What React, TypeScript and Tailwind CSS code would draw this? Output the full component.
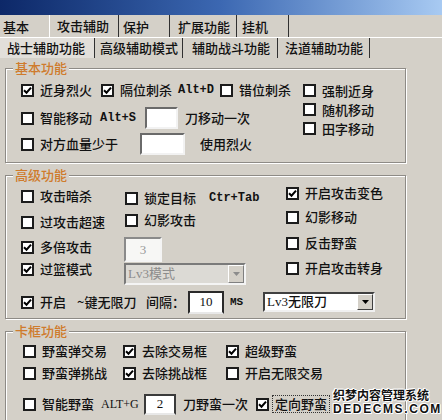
import React from 'react';

type CheckProps = {on?: boolean; label: string; className?: string};

const Box = ({on}: {on?: boolean}) => (
    <span className="flex h-[13px] w-[13px] shrink-0 items-center justify-center border-2 border-[#1c1c1c] bg-white">
        {on && (
            <svg width="9" height="9" viewBox="0 0 9 9">
                <path d="M1 4.2 L3.5 6.7 L8 1.6" stroke="#000" strokeWidth="2" fill="none"/>
            </svg>
        )}
    </span>
);

const Check = ({on, label, className = ''}: CheckProps) => (
    <div className={`flex items-center ${className}`}>
        <Box on={on}/>
        <span className="ml-[6px] whitespace-nowrap">{label}</span>
    </div>
);

const Arrow = ({color}: {color: string}) => (
    <svg width="7" height="4" viewBox="0 0 7 4">
        <path d="M0 0 H7 L3.5 4 Z" fill={color}/>
    </svg>
);

const App: React.FunctionComponent = () => {
    return (
        <div className="relative h-[420px] w-[442px] overflow-hidden bg-[#d4d0c8] text-[13px] font-medium leading-[16px] text-[#111] font-['Noto_Sans_CJK_SC',sans-serif]">
            {/* window caption */}
            <div className="h-[15px] bg-linear-to-r from-[#0d2868] via-[#3c68b2] to-[#a8caf2]"/>

            {/* main tabs */}
            <div className="flex h-[23px] border-b border-white">
                <div className="flex w-[49px] items-center pl-[3px] pt-[2px]">基本</div>
                <div className="flex w-[70px] items-center border-l border-r border-l-white border-r-[#303030] pl-[7px]">攻击辅助</div>
                <div className="flex w-[51px] items-center border-r border-[#303030] pl-[4px] pt-[2px]">保护</div>
                <div className="flex w-[67px] items-center border-r border-[#303030] pl-[8px] pt-[2px]">扩展功能</div>
                <div className="flex w-[52px] items-center border-r border-[#303030] pl-[5px] pt-[2px]">挂机</div>
            </div>

            {/* sub tabs */}
            <div className="flex h-[20px]">
                <div className="flex w-[95px] items-center border-r border-[#303030] bg-[#e2dfda] pl-[7px]">战士辅助功能</div>
                <div className="flex w-[88px] items-center border-r border-[#303030] pl-[5px]">高级辅助模式</div>
                <div className="flex w-[95px] items-center border-r border-[#303030] pl-[9px]">辅助战斗功能</div>
                <div className="flex w-[92px] items-center border-r border-[#303030] pl-[7px]">法道辅助功能</div>
            </div>

            {/* 基本功能 */}
            <fieldset className="ml-[5px] mt-[3px] w-[401px] border border-[#8e8b86] shadow-[inset_1px_1px_0_#fff,1px_1px_0_#fff]">
                <legend className="ml-[7px] bg-[#d4d0c8] px-[2px] leading-[14px] text-[#cf7b2c]">基本功能</legend>
                <div className="flex pb-[7px] pl-[15px]">
                    <div className="w-[282px]">
                        <div className="mt-[4px] flex h-[22px] items-center">
                            <Check on label="近身烈火" className="w-[80px]"/>
                            <div className="flex w-[119px] items-center">
                                <Box on/>
                                <span className="ml-[6px]">隔位刺杀</span>
                                <span className="ml-[6px] text-[12px] font-bold font-['Liberation_Mono',monospace]">Alt+D</span>
                            </div>
                            <Check label="错位刺杀" className="w-[83px]"/>
                        </div>
                        <div className="mt-[6px] flex h-[22px] items-center">
                            <Check label="智能移动" className="w-[79px]"/>
                            <span className="w-[45px] text-[12px] font-bold font-['Liberation_Mono',monospace]">Alt+S</span>
                            <div className="h-[22px] w-[33px] border-2 border-b-[#f2f2f2] border-l-[#6a6a6a] border-r-[#f2f2f2] border-t-[#6a6a6a] bg-white"/>
                            <span className="ml-[7px]">刀移动一次</span>
                        </div>
                        <div className="mt-[4px] flex h-[22px] items-center">
                            <Check label="对方血量少于" className="w-[119px]"/>
                            <div className="h-[22px] w-[45px] border-2 border-b-[#f2f2f2] border-l-[#6a6a6a] border-r-[#f2f2f2] border-t-[#6a6a6a] bg-white"/>
                            <span className="ml-[15px]">使用烈火</span>
                        </div>
                    </div>
                    <div className="mt-[6px] flex flex-col">
                        <Check label="强制近身" className="h-[19px]"/>
                        <Check label="随机移动" className="h-[19px]"/>
                        <Check label="田字移动" className="h-[19px]"/>
                    </div>
                </div>
            </fieldset>

            {/* 高级功能 */}
            <fieldset className="ml-[5px] mt-[5px] w-[401px] border border-[#8e8b86] shadow-[inset_1px_1px_0_#fff,1px_1px_0_#fff]">
                <legend className="ml-[7px] bg-[#d4d0c8] px-[2px] leading-[14px] text-[#cf7b2c]">高级功能</legend>
                <div className="flex pl-[15px]">
                    <div className="flex w-[104px] flex-col">
                        <Check label="攻击暗杀" className="mt-[1px] h-[26px]"/>
                        <Check label="过攻击超速" className="h-[26px]"/>
                        <Check on label="多倍攻击" className="h-[24px]"/>
                        <Check on label="过篮模式" className="h-[20px]"/>
                    </div>
                    <div className="flex w-[161px] flex-col pt-[5px]">
                        <div className="flex h-[22px] items-center">
                            <Box/>
                            <span className="ml-[6px]">锁定目标</span>
                            <span className="ml-[13px] text-[12px] font-bold font-['Liberation_Mono',monospace]">Ctr+Tab</span>
                        </div>
                        <Check label="幻影攻击" className="h-[22px]"/>
                        <div className="-ml-[1px] mt-[6px] flex h-[25px] w-[38px] items-center justify-center border-2 border-b-[#f4f4f4] border-l-[#8a8a8a] border-r-[#f4f4f4] border-t-[#8a8a8a] bg-[#f7f7f5] font-normal text-[#9a9a9a] font-['Liberation_Serif',serif]">3</div>
                        <div className="-ml-[1px] mt-[1px] flex h-[22px] w-[122px] items-center border-2 border-b-[#f4f4f4] border-l-[#7a7a7a] border-r-[#f4f4f4] border-t-[#7a7a7a] bg-[#dcdad5]">
                            <span className="flex-1 pl-[2px] font-normal text-[#8c8c8c] font-['Liberation_Serif','Noto_Sans_CJK_SC',serif]">Lv3模式</span>
                            <span className="flex h-full w-[16px] items-center justify-center border border-b-[#808080] border-l-white border-r-[#808080] border-t-white bg-[#d4d0c8]">
                                <Arrow color="#8c8c8c"/>
                            </span>
                        </div>
                    </div>
                    <div className="flex flex-col">
                        <Check on label="开启攻击变色" className="h-[22px]"/>
                        <Check label="幻影移动" className="h-[26px]"/>
                        <Check label="反击野蛮" className="h-[26px]"/>
                        <Check label="开启攻击转身" className="h-[24px]"/>
                    </div>
                </div>
                <div className="mt-[5px] flex h-[24px] items-center pl-[15px]">
                    <div className="flex w-[125px] items-center">
                        <Box on/>
                        <span className="ml-[6px]">开启</span>
                        <span className="ml-[11px]">~键无限刀</span>
                    </div>
                    <span className="w-[42px]">间隔：</span>
                    <div className="flex h-[23px] w-[36px] items-center justify-center border-2 border-b-[#e8e8e8] border-l-[#2a2a2a] border-r-[#2a2a2a] border-t-[#2a2a2a] bg-white font-normal font-['Liberation_Serif',serif]">10</div>
                    <span className="ml-[6px] w-[33px] text-[11px] font-bold font-['Liberation_Mono',monospace]">MS</span>
                    <div className="flex h-[20px] w-[112px] items-center border-2 border-b-[#f0f0f0] border-l-[#404040] border-r-[#f0f0f0] border-t-[#404040] bg-white">
                        <span className="flex-1 pl-[2px] font-['Liberation_Serif','Noto_Sans_CJK_SC',serif]">Lv3无限刀</span>
                        <span className="flex h-full w-[16px] items-center justify-center border border-b-[#404040] border-l-white border-r-[#404040] border-t-white bg-[#d4d0c8]">
                            <Arrow color="#000"/>
                        </span>
                    </div>
                </div>
                <div className="h-[4px]"/>
            </fieldset>

            {/* 卡框功能 */}
            <fieldset className="ml-[5px] mt-[5px] w-[401px] border border-[#8e8b86] pb-[10px] shadow-[inset_1px_1px_0_#fff,1px_1px_0_#fff]">
                <legend className="ml-[7px] bg-[#d4d0c8] px-[2px] leading-[14px] text-[#cf7b2c]">卡框功能</legend>
                <div className="pl-[17px]">
                    <div className="mt-[2px] flex h-[22px] items-center">
                        <Check label="野蛮弹交易" className="w-[100px]"/>
                        <Check on label="去除交易框" className="w-[103px]"/>
                        <Check on label="超级野蛮"/>
                    </div>
                    <div className="flex h-[22px] items-center">
                        <Check label="野蛮弹挑战" className="w-[100px]"/>
                        <Check on label="去除挑战框" className="w-[103px]"/>
                        <Check label="开启无限交易"/>
                    </div>
                    <div className="mt-[9px] flex h-[22px] items-center">
                        <Check label="智能野蛮" className="w-[78px]"/>
                        <span className="w-[43px] text-[12px] font-normal font-['Liberation_Serif',serif]">ALT+G</span>
                        <div className="flex h-[21px] w-[32px] items-center justify-center border-2 border-b-[#e8e8e8] border-l-[#3a3a3a] border-r-[#3a3a3a] border-t-[#3a3a3a] bg-white font-normal font-['Liberation_Serif',serif]">2</div>
                        <span className="ml-[7px] w-[73px]">刀野蛮一次</span>
                        <Box on/>
                        <span className="ml-[3px] border border-dotted border-[#333] px-[2px]">定向野蛮</span>
                    </div>
                </div>
            </fieldset>

            {/* site watermark */}
            <div className="absolute left-[333px] top-[387px] flex flex-col leading-[15px] [text-shadow:1px_0_#fff,-1px_0_#fff,0_1px_#fff,0_-1px_#fff,1px_1px_#fff,-1px_-1px_#fff]">
                <span className="text-[12px] font-bold">织梦内容管理系统</span>
                <span className="text-[12px] font-bold tracking-[1.6px] font-['Liberation_Sans',sans-serif]">DEDECMS.COM</span>
            </div>
        </div>
    );
};

export default App;
